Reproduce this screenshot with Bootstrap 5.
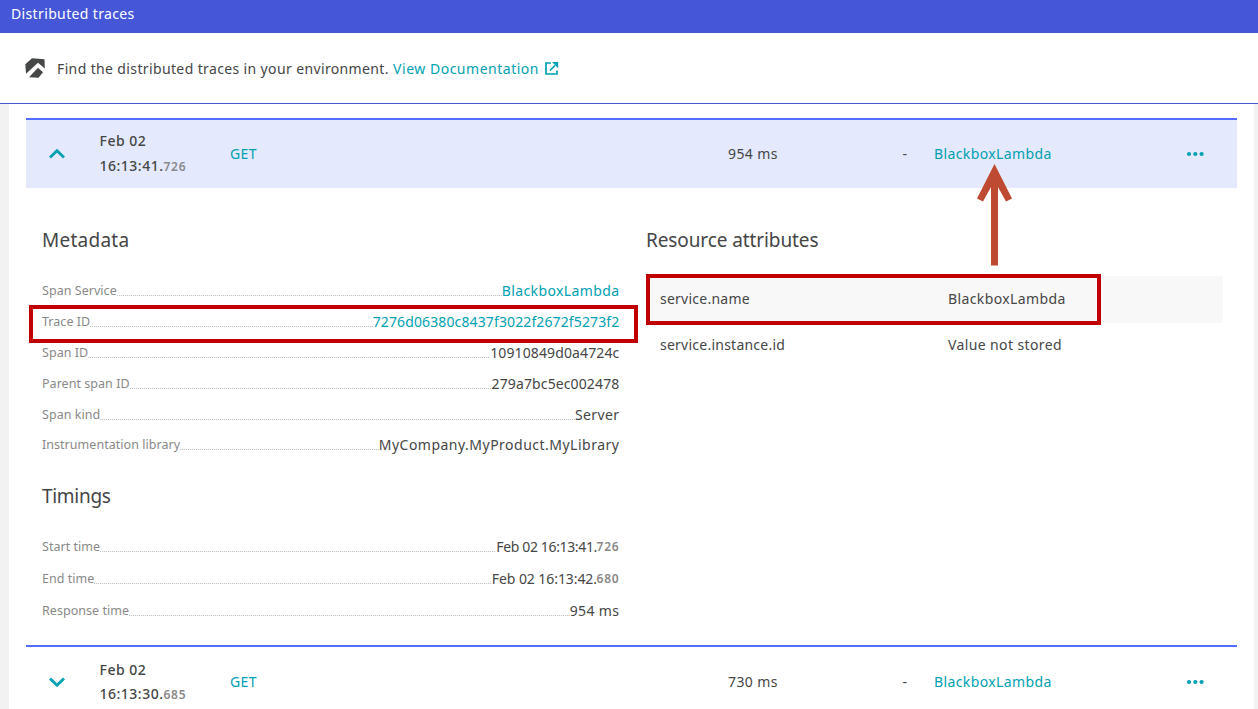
<!DOCTYPE html>
<html lang="en">
<head>
<meta charset="utf-8">
<meta name="viewport" content="width=device-width, initial-scale=1">
<title>Distributed traces</title>
<link rel="stylesheet" href="https://cdn.jsdelivr.net/npm/bootstrap@5.3.0/dist/css/bootstrap.min.css">
<style>
body{font-family:"Noto Sans","Open Sans",sans-serif;font-size:14px;line-height:20px;color:#454646;background:#f2f2f2;height:709px;overflow:hidden;letter-spacing:.38px}
a{color:#00a1b2;text-decoration:none}
.topbar{background:#4556d7;color:#fff;height:33px;padding:4px 11px 0;letter-spacing:.36px}
.intro{height:71px;border-bottom:1px solid #4556d7;padding:1px 25px 0;letter-spacing:.37px}
.intro a{letter-spacing:.51px;margin-left:4.200px;margin-right:6px}
.intro .logo{margin:-1px 11px 0 0}
.sheet{margin:0 4px 0 9px;padding:14px 17px 0;height:605px}
.trace{height:70px;border-top:2px solid #526cff}
.trace.open{background:#e4e9fd}
.trace>*{flex:none}
.c-toggle{width:73px;padding-left:22px}
.c-toggle,.c-more{padding-bottom:2px}
.c-time{width:131px;line-height:25px;font-weight:500;letter-spacing:.5px;padding-left:.5px}
.open .c-time{padding-bottom:2px}
.c-name{width:498px}
.c-dur{width:140px}
.c-dash{width:66px;padding-left:34.500px}
.c-more{padding-right:32.500px}
.next{padding-top:1px}
.next .c-time{line-height:24px;padding-top:2px}
.ms{font-size:12px;color:#898989;font-weight:600;letter-spacing:.75px}
.details{height:457px;padding:0 14px 0 16px}
.left{width:577px;margin-right:27px}
h2{font-size:19px;line-height:26px;font-weight:400;margin:39px 0 0;height:26px;letter-spacing:-.1px}
.wide{letter-spacing:.25px}
.timings{margin-top:27.400px;letter-spacing:-.3px}
.pairs{padding-top:17.600px}
.pairs.late{padding-top:16px}
.kv{height:30.800px}
.late .kv{height:32px}
.kv>:nth-child(3),.kv>.ms{position:relative;margin-right:-.4px}
.k{font-size:12.500px;color:#898989;letter-spacing:.04px}
.hash{letter-spacing:.12px}
.lib{letter-spacing:.49px}
.stamp{letter-spacing:-.36px}
.stamp.loose{letter-spacing:-.08px}
.dots{height:1px;margin-bottom:5px;background:repeating-linear-gradient(90deg,#c4c4c4 0 1px,#f3f3f3 1px 2px)}
.attrs{padding-top:23px}
.attr{height:47px;padding:0 14px 2px;letter-spacing:.24px}
.attr>div:first-child{width:288px}
.attr>span{letter-spacing:.38px}
.attr+.attr{padding-bottom:4px}
.striped{background:#f8f8f8}
.mark-box{position:absolute;border:4px solid #c00000}
.m1{left:-13px;right:-19px;top:3.400px;height:38px}
.m2{left:0;width:455px;top:-2px;height:51px}
.arrow{position:absolute;left:330px;top:-112px}
.f{white-space:nowrap}
</style>
</head>
<body>
<header class="topbar"><span class="f">Distributed traces</span></header>
<section class="intro bg-white d-flex align-items-center">
<svg class="logo" width="21" height="21" viewBox="0 0 21 21"><path fill="#454646" d="M7 .3 19.500 1.300 19.800 10.500 13 4.700 1 15.700.3 6.300zM13 9.700 18 14.300 13.500 19.700 4 19.200z"/></svg>
<span class="f">Find the distributed traces in your environment.</span><a href="#" class="f">View Documentation</a>
<svg width="14" height="13" viewBox="0 0 14 13"><path d="M6 1H1v11h11V8.500M5 8.500l5-5" fill="none" stroke="#00a1b2" stroke-width="1.700"/><path d="M7 0H13.200v6.200z" fill="#00a1b2"/></svg>
</section>
<main class="sheet bg-white">
<div class="trace open d-flex align-items-center">
<div class="c-toggle"><svg width="18" height="12" viewBox="0 0 18 12"><path d="M2 9.500 9 2.800l7 6.700" fill="none" stroke="#00a1b2" stroke-width="2.800"/></svg></div>
<div class="c-time"><span class="f">Feb 02</span><br><span class="f">16:13:41.</span><span class="ms f">726</span></div>
<div class="c-name"><a href="#" class="f">GET</a></div>
<div class="c-dur"><span class="f">954 ms</span></div>
<div class="c-dash">-</div>
<a href="#" class="f">BlackboxLambda</a>
<div class="c-more ms-auto"><svg width="19" height="6" viewBox="0 0 19 6" fill="#00a1b2"><circle cx="3" cy="3" r="2.100"/><circle cx="9.300" cy="3" r="2.100"/><circle cx="15.600" cy="3" r="2.100"/></svg></div>
</div>
<div class="details d-flex">
<div class="left">
<h2 class="wide">Metadata</h2>
<div class="pairs">
<div class="kv d-flex align-items-end"><span class="k f">Span Service</span><i class="dots flex-fill"></i><a href="#" class="f">BlackboxLambda</a></div>
<div class="kv d-flex align-items-end position-relative"><span class="k f">Trace ID</span><i class="dots flex-fill"></i><a href="#" class="f hash">7276d06380c8437f3022f2672f5273f2</a><div class="mark-box m1"></div></div>
<div class="kv d-flex align-items-end"><span class="k f">Span ID</span><i class="dots flex-fill"></i><span class="f hash">10910849d0a4724c</span></div>
<div class="kv d-flex align-items-end"><span class="k f">Parent span ID</span><i class="dots flex-fill"></i><span class="f hash">279a7bc5ec002478</span></div>
<div class="kv d-flex align-items-end"><span class="k f">Span kind</span><i class="dots flex-fill"></i><span class="f">Server</span></div>
<div class="kv d-flex align-items-end"><span class="k f">Instrumentation library</span><i class="dots flex-fill"></i><span class="f lib">MyCompany.MyProduct.MyLibrary</span></div>
</div>
<h2 class="timings">Timings</h2>
<div class="pairs late">
<div class="kv d-flex align-items-end"><span class="k f">Start time</span><i class="dots flex-fill"></i><span class="f stamp">Feb 02 16:13:41.</span><span class="ms f">726</span></div>
<div class="kv d-flex align-items-end"><span class="k f">End time</span><i class="dots flex-fill"></i><span class="f stamp loose">Feb 02 16:13:42.</span><span class="ms f">680</span></div>
<div class="kv d-flex align-items-end"><span class="k f">Response time</span><i class="dots flex-fill"></i><span class="f">954 ms</span></div>
</div>
</div>
<div class="flex-fill">
<h2>Resource attributes</h2>
<div class="attrs">
<div class="attr striped d-flex align-items-center position-relative"><div class="f">service.name</div><span class="f">BlackboxLambda</span><div class="mark-box m2"></div>
<svg class="arrow" width="36" height="104" viewBox="0 0 36 104"><path fill="#bf4a32" d="M18.500 0 36 34.500 30 37.500 22 23V101.500H15V23L7 37.500 1 34.500z"/></svg></div>
<div class="attr d-flex align-items-center"><div class="f">service.instance.id</div><span class="f">Value not stored</span></div>
</div>
</div>
</div>
<div class="trace next d-flex align-items-center">
<div class="c-toggle"><svg width="18" height="12" viewBox="0 0 18 12"><path d="M2 2.500 9 9.200l7-6.700" fill="none" stroke="#00a1b2" stroke-width="2.800"/></svg></div>
<div class="c-time"><span class="f">Feb 02</span><br><span class="f">16:13:30.</span><span class="ms f">685</span></div>
<div class="c-name"><a href="#" class="f">GET</a></div>
<div class="c-dur"><span class="f">730 ms</span></div>
<div class="c-dash">-</div>
<a href="#" class="f">BlackboxLambda</a>
<div class="c-more ms-auto"><svg width="19" height="6" viewBox="0 0 19 6" fill="#00a1b2"><circle cx="3" cy="3" r="2.100"/><circle cx="9.300" cy="3" r="2.100"/><circle cx="15.600" cy="3" r="2.100"/></svg></div>
</div>
</main>
<script src="https://cdn.jsdelivr.net/npm/bootstrap@5.3.0/dist/js/bootstrap.bundle.min.js"></script>
</body>
</html>
